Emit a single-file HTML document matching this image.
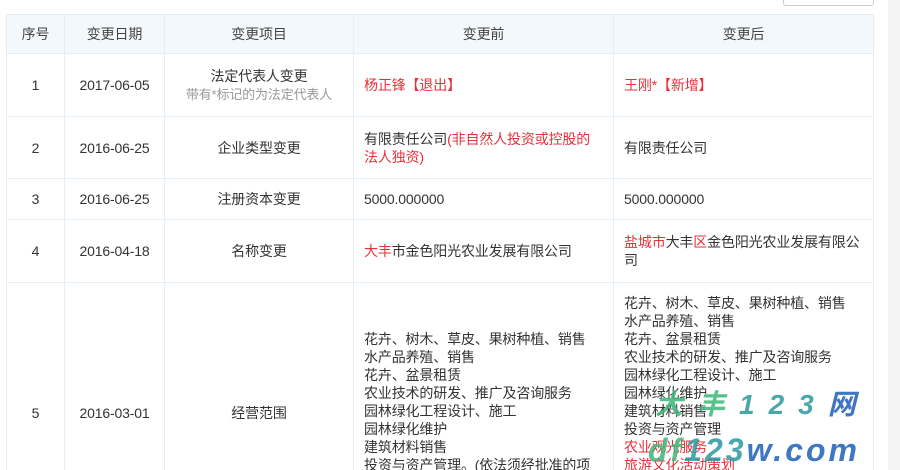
<!DOCTYPE html><html><head><meta charset="utf-8"><style>
html,body{margin:0;width:900px;height:470px;overflow:hidden}
body{background:#fff;font-family:"Liberation Sans","Noto Sans CJK SC",sans-serif;font-size:14px;letter-spacing:-0.15px;color:#333;position:relative}
.strip{position:absolute;left:888px;top:0;width:12px;height:470px;background:#f3f3f3}
.btn{position:absolute;left:783px;top:-4px;width:89px;height:8px;border:1px solid #ccc;border-radius:3px;background:#fff}
.wrap{position:absolute;left:0;top:0;width:900px;height:470px;overflow:hidden}
table{position:absolute;left:6px;top:14px;border-collapse:collapse;table-layout:fixed;width:867px}
td,th{border:1px solid #e6eef6;padding:0 10px;vertical-align:middle;line-height:18px}
th{background:#f2f8fc;font-weight:normal;height:38px;color:#444}
.c{text-align:center}
.r{color:#e8303a}
.g{color:#999;font-size:13px}
.wm{position:absolute;font-style:italic;font-weight:bold;white-space:nowrap;opacity:.85}
</style></head><body>
<div class="wrap">
<div class="strip"></div><div class="btn"></div>
<table>
<colgroup><col style="width:58px"><col style="width:100px"><col style="width:189px"><col style="width:260px"><col style="width:260px"></colgroup>
<tr><th>序号</th><th>变更日期</th><th>变更项目</th><th>变更前</th><th>变更后</th></tr>
<tr style="height:63px"><td class="c">1</td><td class="c">2017-06-05</td><td class="c">法定代表人变更<br><span class="g">带有*标记的为法定代表人</span></td><td class="r">杨正锋【退出】</td><td class="r">王刚*【新增】</td></tr>
<tr style="height:62px"><td class="c">2</td><td class="c">2016-06-25</td><td class="c">企业类型变更</td><td>有限责任公司<span class="r">(非自然人投资或控股的法人独资)</span></td><td>有限责任公司</td></tr>
<tr style="height:41px"><td class="c">3</td><td class="c">2016-06-25</td><td class="c">注册资本变更</td><td>5000.000000</td><td>5000.000000</td></tr>
<tr style="height:63px"><td class="c">4</td><td class="c">2016-04-18</td><td class="c">名称变更</td><td><span class="r">大丰</span>市金色阳光农业发展有限公司</td><td><span class="r">盐城市</span>大丰<span class="r">区</span>金色阳光农业发展有限公司</td></tr>
<tr style="height:260px"><td class="c">5</td><td class="c">2016-03-01</td><td class="c">经营范围</td><td style="vertical-align:top;padding-top:47px">花卉、树木、草皮、果树种植、销售<br>水产品养殖、销售<br>花卉、盆景租赁<br>农业技术的研发、推广及咨询服务<br>园林绿化工程设计、施工<br>园林绿化维护<br>建筑材料销售<br>投资与资产管理。(依法须经批准的项<br>目，经相关部门批准后方可开展经营活动)</td><td style="vertical-align:top;padding-top:11px">花卉、树木、草皮、果树种植、销售<br>水产品养殖、销售<br>花卉、盆景租赁<br>农业技术的研发、推广及咨询服务<br>园林绿化工程设计、施工<br>园林绿化维护<br>建筑材料销售<br>投资与资产管理<br><span class="r">农业观光服务<br>旅游文化活动策划</span></td></tr>
</table>
<div class="wm" style="left:655px;top:390px;font-size:28px;line-height:30px;letter-spacing:14px;color:#3cb878">大丰<span style="color:#2a9aa0">123</span><span style="color:#1e60b8">网</span></div>
<div class="wm" style="left:648px;top:432px;font-size:32px;line-height:36px;letter-spacing:3px;color:#3cb878">df<span style="color:#2a9aa0">123</span><span style="color:#1e60b8">w.com</span></div>
</div>
</body></html>
